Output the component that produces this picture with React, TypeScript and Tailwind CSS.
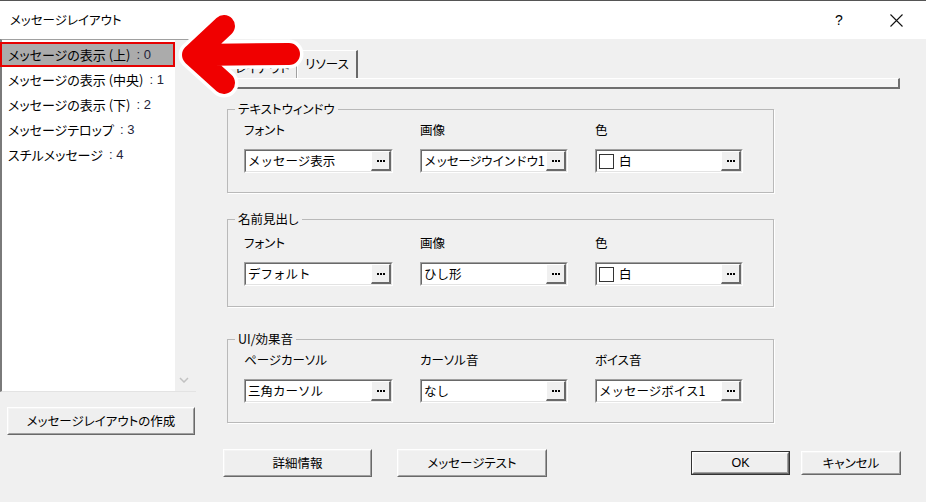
import React from "react";

const items = [
  { label: "メッセージの表示 (上)", n: "0" },
  { label: "メッセージの表示 (中央)", n: "1" },
  { label: "メッセージの表示 (下)", n: "2" },
  { label: "メッセージテロップ", n: "3" },
  { label: "スチルメッセージ", n: "4" },
];

const groups = [
  {
    title: "テキストウィンドウ",
    box: "mt-[20px] h-[84px] pt-[11px]",
    cols: [
      { head: "フォント", value: "メッセージ表示", w: "w-[149px]" },
      { head: "画像", value: "メッセージウインドウ1", w: "w-[148px]", tight: true },
      { head: "色", value: "白", w: "w-[148px]", swatch: true },
    ],
  },
  {
    title: "名前見出し",
    box: "mt-[26px] h-[88px] pt-[14px]",
    cols: [
      { head: "フォント", value: "デフォルト", w: "w-[149px]" },
      { head: "画像", value: "ひし形", w: "w-[148px]" },
      { head: "色", value: "白", w: "w-[148px]", swatch: true },
    ],
  },
  {
    title: "UI/効果音",
    box: "mt-[32px] h-[84px] pt-[11px]",
    cols: [
      { head: "ページカーソル", value: "三角カーソル", w: "w-[149px]" },
      { head: "カーソル音", value: "なし", w: "w-[148px]" },
      { head: "ボイス音", value: "メッセージボイス1", w: "w-[148px]" },
    ],
  },
];

function Dots() {
  return (
    <div className="flex gap-[1px]">
      <span className="w-[2px] h-[2px] bg-black" />
      <span className="w-[2px] h-[2px] bg-black" />
      <span className="w-[2px] h-[2px] bg-black" />
    </div>
  );
}

function Field({ value, w, swatch, tight }: { value: string; w: string; swatch?: boolean; tight?: boolean }) {
  return (
    <div className={`${w} h-[24px] border border-t-[#a0a0a0] border-l-[#a0a0a0] border-b-white border-r-white`}>
      <div className="h-full flex border border-t-[#696969] border-l-[#696969] border-b-[#e3e3e3] border-r-[#e3e3e3] bg-white">
        <div
          className={`flex-1 flex items-center pl-[2px] overflow-hidden whitespace-nowrap leading-none [font-feature-settings:normal] ${
            tight ? "tracking-[-1.1px]" : ""
          }`}
        >
          {swatch && <span className="w-[15px] h-[15px] border border-[#333] mr-[5px] shrink-0" />}
          {value}
        </div>
        <div className="w-[20px] shrink-0 flex items-center justify-center bg-[#f0f0f0] border-t border-l border-t-white border-l-white border-b-2 border-r-2 border-b-[#696969] border-r-[#696969]">
          <Dots />
        </div>
      </div>
    </div>
  );
}

function Btn({ children, w, h, def }: { children: React.ReactNode; w: string; h: string; def?: boolean }) {
  return (
    <div className={`${w} ${h} ${def ? "border border-[#333]" : ""}`}>
      <div className="h-full border border-t-white border-l-white border-b-[#696969] border-r-[#696969] bg-[#f0f0f0]">
        <div className="h-full flex items-center justify-center border border-t-[#f4f4f4] border-l-[#f4f4f4] border-b-[#a0a0a0] border-r-[#a0a0a0] bg-[#efefef]">
          {children}
        </div>
      </div>
    </div>
  );
}

export default function App() {
  return (
    <div className="relative w-[926px] h-[502px] overflow-hidden bg-[#f0f0f0] flex flex-col text-[12.5px] text-black font-['Noto_Sans_CJK_JP',sans-serif] [font-feature-settings:'palt']">

      {/* TITLE */}
      <div className="h-[39px] shrink-0 bg-white border-t border-[#555] flex items-center pl-[10px]">
        <span className="text-[12.5px]">メッセージレイアウト</span>
        <div className="ml-auto flex items-center gap-[11px] pr-[7px]">
          <div className="w-[46px] flex justify-center text-[14px] font-['Liberation_Sans',sans-serif]">?</div>
          <div className="w-[46px] flex justify-center">
            <svg width="13" height="13" viewBox="0 0 13 13">
              <path d="M0.5 0.5 L12.5 12.5 M12.5 0.5 L0.5 12.5" stroke="#111" strokeWidth="1.1" fill="none" />
            </svg>
          </div>
        </div>
      </div>

      {/* BODY */}
      <div className="flex-1 flex">

        {/* LEFT */}
        <div className="w-[223px] shrink-0 flex flex-col">
          <div className="w-[196px] h-[353px] flex bg-white border-t border-l-2 border-b border-t-[#a0a0a0] border-l-[#7a7a7a] border-b-[#e3e3e3]">
            <div className="flex-1 pt-[2px] text-[13px]">
              {items.map((it, i) => (
                <div
                  key={it.n}
                  className={`h-[25px] flex items-center whitespace-nowrap ${
                    i === 0 ? "bg-[#ababab] border-2 border-[#e60000] pl-[6px] -ml-[2px]" : "pl-[6px]"
                  }`}
                >
                  {it.label}
                  <span className="ml-[6px] text-[#23233a] font-['Liberation_Sans',sans-serif]">:&nbsp;{it.n}</span>
                </div>
              ))}
            </div>
            <div className="w-[21px] bg-[#f0f0f0] flex flex-col justify-end items-center pb-[8px] pr-[3px]">
              <svg width="10" height="6" viewBox="0 0 10 6">
                <path d="M1 1 L5 5 L9 1" stroke="#c2c2c2" strokeWidth="1.5" fill="none" />
              </svg>
            </div>
          </div>
          <div className="mt-[15px] ml-[7px]">
            <Btn w="w-[188px]" h="h-[28px]">メッセージレイアウトの作成</Btn>
          </div>
        </div>

        {/* RIGHT */}
        <div className="flex-1 flex flex-col pt-[11px]">
          <div className="flex items-end h-[28px] pl-[5px]">
            <div className="w-[69px] h-[21px] flex items-center justify-center border-t border-l border-t-white border-l-white border-r border-r-[#a0a0a0]">
              レイアウト
            </div>
            <div className="w-[61px] h-[28px] flex items-center justify-center border-t border-l border-t-white border-l-white border-r-2 border-r-[#696969]">
              リソース
            </div>
          </div>
          <div className="ml-[5px] w-[672px] h-[11px] bg-[#f4f4f4] border-t border-l border-t-white border-l-white border-b-2 border-r-2 border-b-[#6f6f6f] border-r-[#6f6f6f]" />

          {groups.map((g) => (
            <div key={g.title} className={`relative ml-[4px] w-[547px] border border-[#b9b9b9] shadow-[1px_1px_0_white] ${g.box}`}>
              <div className="absolute left-[7px] -top-[10px] px-[3px] leading-[18px] bg-[#f0f0f0]">{g.title}</div>
              <div className="grid grid-cols-[176px_175px_1fr] pl-[16px]">
                {g.cols.map((c) => (
                  <div key={c.head} className="flex flex-col">
                    <div className="h-[18px] leading-[18px]">{c.head}</div>
                    <div className="mt-[10px]">
                      <Field value={c.value} w={c.w} swatch={c.swatch} tight={c.tight} />
                    </div>
                  </div>
                ))}
              </div>
            </div>
          ))}

          <div className="mt-[26px] flex items-center">
            <Btn w="w-[149px]" h="h-[28px]">詳細情報</Btn>
            <div className="ml-[25px]">
              <Btn w="w-[150px]" h="h-[28px]">メッセージテスト</Btn>
            </div>
            <div className="ml-[144px]">
              <Btn w="w-[99px]" h="h-[24px]" def>
                <span className="font-['Liberation_Sans',sans-serif]">OK</span>
              </Btn>
            </div>
            <div className="ml-[11px]">
              <Btn w="w-[100px]" h="h-[24px]">キャンセル</Btn>
            </div>
          </div>
        </div>
      </div>

      {/* ARROW overlay */}
      <svg className="absolute left-[160px] top-0" width="150" height="110" viewBox="160 0 150 110">
        <g fill="none" strokeLinecap="round" strokeLinejoin="round">
          <path d="M224 26 L193 55 L224 83 M193 55 L289 54" stroke="white" strokeWidth="29" />
          <path d="M224 26 L193 55 L224 83 M193 55 L289 54" stroke="#f00000" strokeWidth="22" />
        </g>
      </svg>
    </div>
  );
}
